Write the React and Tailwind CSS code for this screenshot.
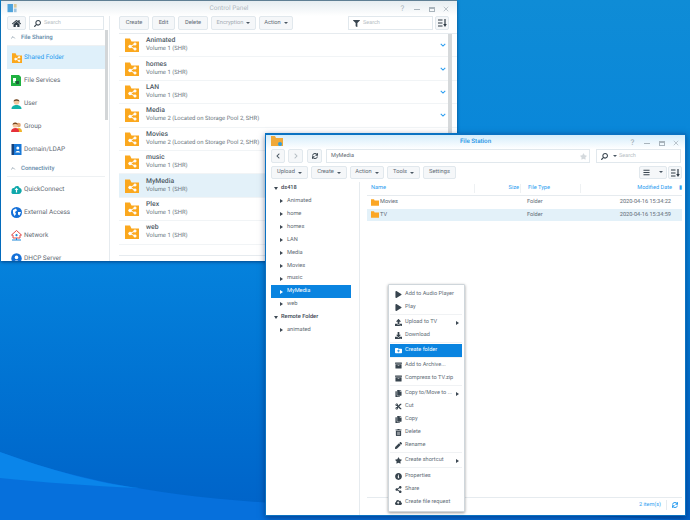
import {
  FaPlay, FaUpload, FaDownload, FaFolderPlus, FaArchive, FaCopy, FaCut, FaTrashAlt, FaPen,
  FaStar, FaInfoCircle, FaShareAlt, FaCloudUploadAlt, FaHome, FaSearch, FaFilter,
  FaChevronLeft, FaChevronRight, FaSync, FaBars,
} from "react-icons/fa";

const sharedFolders = [
  ["Animated", "Volume 1 (SHR)"],
  ["homes", "Volume 1 (SHR)"],
  ["LAN", "Volume 1 (SHR)"],
  ["Media", "Volume 2 (Located on Storage Pool 2, SHR)"],
  ["Movies", "Volume 2 (Located on Storage Pool 2, SHR)"],
  ["music", "Volume 1 (SHR)"],
  ["MyMedia", "Volume 1 (SHR)"],
  ["Plex", "Volume 1 (SHR)"],
  ["web", "Volume 1 (SHR)"],
];

const treeItems = ["Animated", "home", "homes", "LAN", "Media", "Movies", "music", "MyMedia", "web"];

const menuGroups = [
  [["Add to Audio Player", FaPlay], ["Play", FaPlay]],
  [["Upload to TV", FaUpload, true], ["Download", FaDownload]],
  [["Create folder", FaFolderPlus]],
  [["Add to Archive...", FaArchive], ["Compress to TV.zip", FaArchive]],
  [["Copy to/Move to ...", FaCopy, true], ["Cut", FaCut], ["Copy", FaCopy], ["Delete", FaTrashAlt], ["Rename", FaPen]],
  [["Create shortcut", FaStar, true]],
  [["Properties", FaInfoCircle], ["Share", FaShareAlt], ["Create file request", FaCloudUploadAlt]],
];

const Caret = () => (
  <span className="ml-[3px] inline-block border-x-[2px] border-t-[2px] border-x-transparent border-t-[#4a5763] align-middle" />
);

const Btn = ({ children, className = "", faded }) => (
  <div
    className={`flex h-full shrink-0 items-center justify-center rounded-[2px] border border-[#e1e8ed] bg-[#f5f7f9] text-[5.7px] ${
      faded ? "text-[#a5adb4]" : "text-[#5f6a74]"
    } ${className}`}
  >
    {children}
  </div>
);

const SortIcon = () => (
  <svg viewBox="0 0 9 8" className="h-[8px] w-[9px]">
    <path d="M0 1 H4.5 M0 4 H4.5 M0 7 H4.5" stroke="#2f3b45" strokeWidth="1" />
    <path d="M7 0 V6" stroke="#2f3b45" strokeWidth="1.2" />
    <path d="M5.2 5 L8.8 5 L7 8 Z" fill="#2f3b45" />
  </svg>
);

const SharedFolderIcon = ({ className = "h-[14px] w-[14px]" }) => (
  <svg viewBox="0 0 14 14" className={`shrink-0 ${className}`}>
    <path d="M0 2.5 L0 14 L14 14 L14 3.5 L6.5 3.5 L5 0.5 L0 0.5 Z" fill="#fba81e" />
    <g stroke="#fff" strokeWidth="1" fill="#fff">
      <path d="M5 8.5 L10 6 M5 8.5 L10 11" fill="none" />
      <circle cx="5" cy="8.5" r="1.3" />
      <circle cx="10" cy="6" r="1.1" />
      <circle cx="10" cy="11" r="1.1" />
    </g>
  </svg>
);

const FolderIcon = () => (
  <svg viewBox="0 0 10 8" className="h-[7px] w-[8px] shrink-0">
    <path d="M0 1 L0 8 L10 8 L10 1.5 L4.5 1.5 L3.8 0 L0 0 Z" fill="#fba625" />
  </svg>
);

const FileServicesIcon = () => (
  <svg viewBox="0 0 11 11" className="h-[11px] w-[11px]">
    <path d="M0 0 H8 L10 2 V11 H0 Z" fill="#1fb141" />
    <rect x="2" y="3" width="3" height="3" fill="#fff" />
    <rect x="5" y="6" width="3" height="3" fill="#1c5f38" />
    <rect x="2" y="6" width="2" height="2" fill="#bfeccb" />
  </svg>
);

const UserIcon = () => (
  <svg viewBox="0 0 11 11" className="h-[11px] w-[11px]">
    <path d="M0.5 11 C0.5 8 3 7 5.5 7 C8 7 10.5 8 10.5 11 Z" fill="#12b3a8" />
    <circle cx="5.5" cy="4" r="2.8" fill="#f4c8a0" />
    <path d="M2.6 3.6 C2.6 0.6 8.4 0.6 8.4 3.6 C7 2.6 4 2.6 2.6 3.6 Z" fill="#6b4a2e" />
  </svg>
);

const GroupIcon = () => (
  <svg viewBox="0 0 11 11" className="h-[11px] w-[11px]">
    <circle cx="7.6" cy="4" r="2.2" fill="#e3a878" />
    <path d="M5 11 C5 8 6.5 7 8 7 C9.5 7 11 8 11 11 Z" fill="#f0b429" />
    <path d="M0 11 C0 8 2 7 4.5 7 C7 7 8 8 8 11 Z" fill="#e6303a" />
    <circle cx="4.2" cy="4" r="2.6" fill="#f4c8a0" />
    <path d="M1.6 3.8 C1.6 0.8 6.8 0.8 6.8 3.8 C5.6 2.8 3 2.8 1.6 3.8 Z" fill="#7a4a24" />
  </svg>
);

const DomainIcon = () => (
  <svg viewBox="0 0 11 11" className="h-[11px] w-[11px]">
    <rect x="0.5" width="2.5" height="11" fill="#16427c" />
    <rect x="3" width="7.5" height="11" fill="#1778d8" />
    <circle cx="6.8" cy="4" r="1.5" fill="#fff" />
    <path d="M4.4 8.5 C4.4 6.4 9.2 6.4 9.2 8.5 Z" fill="#fff" />
  </svg>
);

const QuickConnectIcon = () => (
  <svg viewBox="0 0 11 11" className="h-[11px] w-[11px]">
    <path d="M2.5 10 C0.4 10 0 8 0.8 7 C0 5 2 3.6 3.2 4.2 C3.8 1.4 8 1 8.6 4 C10.6 4.2 11.4 7 10 8.6 C9.6 9.6 9 10 8 10 Z" fill="#0fa8ab" />
    <path d="M5.5 3.8 L3.6 6 H4.9 V8.4 H6.1 V6 H7.4 Z" fill="#fff" />
  </svg>
);

const GlobeIcon = () => (
  <svg viewBox="0 0 11 11" className="h-[11px] w-[11px]">
    <circle cx="5.5" cy="5.5" r="5.5" fill="#1470d8" />
    <path d="M2 3 L5 1.5 L6 3.5 L4 5 L5 7 L3.5 9 L2 6 Z M7 5 L10 5 L8.5 8.5 L7 7.5 Z" fill="#fff" />
  </svg>
);

const NetworkIcon = () => (
  <svg viewBox="0 0 11 11" className="h-[11px] w-[11px]">
    <path d="M5.5 0.5 L0.5 5 H2 V8 H9 V5 H10.5 Z" fill="#fff" stroke="#e04a4a" strokeWidth="1" />
    <circle cx="5.5" cy="5.2" r="1.1" fill="#1e88d8" />
    <path d="M1 10 H10 M5.5 8 V10" stroke="#1e88d8" strokeWidth="1" />
  </svg>
);

const DhcpIcon = () => (
  <svg viewBox="0 0 11 11" className="h-[11px] w-[11px]">
    <circle cx="5.5" cy="5.5" r="5.2" fill="#1470d8" />
    <circle cx="5.5" cy="4.4" r="1.8" fill="#fff" />
    <path d="M2.4 10 C2.4 6.8 8.6 6.8 8.6 10 Z" fill="#fff" />
  </svg>
);

const NavRow = ({ label, icon, active, className = "" }) => (
  <div
    className={`flex h-[23px] shrink-0 items-center gap-[2px] pl-[4px] text-[6.5px] ${
      active ? "bg-[#dff0fa] text-[#1d9bf0]" : "text-[#5f6a74]"
    } ${className}`}
  >
    <span className="flex h-[11px] w-[11px] shrink-0 items-center justify-center">{icon}</span>
    {label}
  </div>
);

const SectionTitle = ({ label, className = "" }) => (
  <div className={`flex shrink-0 items-center gap-[5px] pl-[3px] text-[6px] font-medium text-[#6189a8] ${className}`}>
    <svg viewBox="0 0 8 5" className="h-[3px] w-[6px]">
      <path d="M1 4 L4 1 L7 4" stroke="#5b7386" fill="none" strokeWidth="1" />
    </svg>
    {label}
  </div>
);

const WinControls = () => (
  <div className="flex items-center gap-[8.5px] text-[#a9b4bc]">
    <span className="w-[6px] text-center text-[8px] leading-none">?</span>
    <span className="h-px w-[6px] bg-[#a9b4bc]" />
    <span className="h-[5px] w-[6px] border border-t-2 border-[#a9b4bc]" />
    <svg viewBox="0 0 8 8" className="h-[6px] w-[6px]">
      <path d="M1 1 L7 7 M7 1 L1 7" stroke="#a9b4bc" strokeWidth="1" />
    </svg>
  </div>
);

const ControlPanel = () => (
  <div className="absolute top-0 left-px flex h-[261px] w-[456px] flex-col overflow-hidden border-t border-[#5f7f94] bg-white shadow-[0_1px_3px_rgba(0,30,80,0.6)]">
    <div className="relative flex h-[15px] shrink-0 items-center justify-center bg-gradient-to-b from-[#e6edf1] to-white text-[6.5px] text-[#aeb8bf]">
      <svg viewBox="0 0 11 11" className="absolute top-[3px] left-[6px] h-[10px] w-[11px]">
        <rect width="6" height="9" fill="#4da3dc" />
        <rect x="7" width="3" height="4" fill="#d8c89a" />
        <rect x="7" y="5" width="3" height="4" fill="#9fc5df" />
      </svg>
      Control Panel
      <div className="absolute top-[4px] right-[8px]">
        <WinControls />
      </div>
    </div>
    <div className="flex min-h-0 flex-1">
      <div className="relative flex w-[109px] shrink-0 flex-col overflow-hidden border-r border-[#e6ebef] pl-[6px]">
        <div className="flex h-[14px] shrink-0 gap-[3px]">
          <Btn className="w-[19px]">
            <FaHome className="h-[9px] w-[9px] text-[#2d3a45]" />
          </Btn>
          <div className="flex w-[75px] items-center gap-[3px] border border-[#e1e8ed] pl-[4px] text-[5.5px] text-[#b5bdc4]">
            <FaSearch className="h-[7px] w-[7px] -scale-x-100 text-[#3a4650]" />
            Search
          </div>
        </div>
        <SectionTitle label="File Sharing" className="mr-[4px] h-[16px] border-b border-[#eef1f3]" />
        <NavRow label="Shared Folder" active className="mr-[4px]" icon={<SharedFolderIcon className="h-[10px] w-[10px]" />} />
        <NavRow label="File Services" icon={<FileServicesIcon />} />
        <NavRow label="User" icon={<UserIcon />} />
        <NavRow label="Group" icon={<GroupIcon />} />
        <NavRow label="Domain/LDAP" icon={<DomainIcon />} />
        <SectionTitle label="Connectivity" className="mr-[4px] h-[16px] border-b border-[#eef1f3]" />
        <NavRow label="QuickConnect" className="mt-[1px]" icon={<QuickConnectIcon />} />
        <NavRow label="External Access" icon={<GlobeIcon />} />
        <NavRow label="Network" icon={<NetworkIcon />} />
        <NavRow label="DHCP Server" icon={<DhcpIcon />} />
        <div className="absolute top-[14px] right-[1px] h-[90px] w-[3px] bg-[#d3d6d8]" />
      </div>
      <div className="flex min-w-0 flex-1 flex-col">
        <div className="flex h-[14px] shrink-0 gap-[3px] pr-[8px] pl-[9px]">
          <Btn className="w-[30px]">Create</Btn>
          <Btn className="w-[23px]">Edit</Btn>
          <Btn className="w-[30px]">Delete</Btn>
          <Btn className="w-[45px]" faded>
            Encryption
            <Caret />
          </Btn>
          <Btn className="w-[34px]">
            Action
            <Caret />
          </Btn>
          <div className="flex-1" />
          <div className="flex w-[85px] items-center gap-[3px] border border-[#e1e8ed] pl-[4px] text-[5.5px] text-[#b5bdc4]">
            <FaFilter className="h-[7px] w-[7px] text-[#3a4650]" />
            Search
          </div>
          <Btn className="-ml-px w-[14px]">
            <SortIcon />
          </Btn>
        </div>
        <div className="mt-[3px] ml-[9px] flex min-h-0 flex-1 flex-col border-t border-[#e6ebef]">
          {sharedFolders.map(([name, sub]) => (
            <div
              key={name}
              className={`flex h-[23.4px] shrink-0 items-center border-b border-[#f1f4f6] pr-[11px] pl-[6px] ${
                name === "MyMedia" ? "bg-[#e3f1f9]" : ""
              }`}
            >
              <SharedFolderIcon />
              <div className="ml-[7px] flex-1 pb-[1px]">
                <div className="text-[6.8px] leading-[10px] font-medium text-[#4f5b66]">{name}</div>
                <div className="text-[5.9px] leading-[9px] text-[#6c7780]">{sub}</div>
              </div>
              <svg viewBox="0 0 8 5" className="h-[4px] w-[6px]">
                <path d="M1 1 L4 4 L7 1" stroke="#2b9df0" fill="none" strokeWidth="1.4" />
              </svg>
            </div>
          ))}
          <div className="mt-auto h-[6px] shrink-0 border-t border-[#e6ebef]" />
        </div>
      </div>
    </div>
    <div className="absolute top-[33px] right-[5px] h-[222px] w-[4px] bg-[#d6d9db]" />
  </div>
);

const TreeArrow = ({ open, light }) =>
  open ? (
    <span className="inline-block shrink-0 border-x-[2px] border-t-[3px] border-x-transparent border-t-[#3d4853]" />
  ) : (
    <span
      className={`inline-block shrink-0 border-y-[2px] border-l-[3px] border-y-transparent ${
        light ? "border-l-white" : "border-l-[#3d4853]"
      }`}
    />
  );

const FileStation = () => (
  <div className="absolute top-[133px] left-[265px] flex h-[383px] w-[421px] flex-col border border-t-2 border-[#0a72c2] bg-white shadow-[0_2px_6px_rgba(0,20,70,0.5)]">
    <div className="relative flex h-[14px] shrink-0 items-center justify-center bg-gradient-to-b from-[#d5edfb] to-white text-[6.2px] font-medium text-[#1d93e6]">
      <svg viewBox="0 0 12 11" className="absolute top-[1px] left-[5px] h-[11px] w-[12px]">
        <path d="M0 1 L0 10 L12 10 L12 2 L5 2 L4 0 L0 0 Z" fill="#f0a93a" />
        <circle cx="9" cy="8" r="2" fill="#2e9fe0" />
      </svg>
      File Station
      <div className="absolute top-[4px] right-[6px]">
        <WinControls />
      </div>
    </div>
    <div className="flex h-[14px] shrink-0 pr-[4px] pl-[5px]">
      <Btn className="w-[14px]">
        <FaChevronLeft className="h-[6px] w-[6px] text-[#4a5763]" />
      </Btn>
      <Btn className="ml-[3px] w-[15px]">
        <FaChevronRight className="h-[6px] w-[6px] text-[#b5bdc4]" />
      </Btn>
      <Btn className="ml-[4px] w-[15px]">
        <FaSync className="h-[6px] w-[6px] text-[#3a4650]" />
      </Btn>
      <div className="ml-[4px] flex w-[264px] items-center justify-between border border-[#e1e8ed] pr-[2px] pl-[4px] text-[5.6px] text-[#5f6a74]">
        MyMedia
        <FaStar className="h-[7px] w-[7px] text-[#d4d9dd]" />
      </div>
      <div className="ml-[6px] flex flex-1 items-center gap-[2px] border border-[#e1e8ed] pl-[4px] text-[5.5px] text-[#b5bdc4]">
        <FaSearch className="h-[7px] w-[7px] -scale-x-100 text-[#3a4650]" />
        <Caret />
        Search
      </div>
    </div>
    <div className="mt-[3px] flex h-[13px] shrink-0 gap-[3px] pr-[3px] pl-[5px]">
      <Btn className="w-[37px]">
        Upload
        <Caret />
      </Btn>
      <Btn className="w-[36px]">
        Create
        <Caret />
      </Btn>
      <Btn className="w-[34px]">
        Action
        <Caret />
      </Btn>
      <Btn className="w-[33px]">
        Tools
        <Caret />
      </Btn>
      <Btn className="w-[33px]">Settings</Btn>
      <div className="flex-1" />
      <Btn className="w-[28px]">
        <FaBars className="h-[7px] w-[7px] text-[#3a4650]" />
        <span className="ml-[6px]">
          <Caret />
        </span>
      </Btn>
      <Btn className="-ml-[2px] w-[14px]">
        <SortIcon />
      </Btn>
    </div>
    <div className="mt-[3px] flex min-h-0 flex-1">
      <div className="flex w-[94px] shrink-0 flex-col border-r border-[#e6ebef] pl-[5px] text-[5.7px] text-[#5e6a74]">
        <div className="flex h-[12.9px] items-center gap-[3px] pl-[3px] font-medium text-[#3d4853]">
          <TreeArrow open />
          ds418
        </div>
        {treeItems.map((item) => (
          <div
            key={item}
            className={`flex h-[12.9px] w-[80px] items-center gap-[4px] pl-[9px] ${
              item === "MyMedia" ? "bg-[#0a84e0] text-white" : ""
            }`}
          >
            <TreeArrow light={item === "MyMedia"} />
            {item}
          </div>
        ))}
        <div className="flex h-[12.9px] items-center gap-[3px] pl-[3px] font-medium text-[#3d4853]">
          <TreeArrow open />
          Remote Folder
        </div>
        <div className="flex h-[12.9px] items-center gap-[4px] pl-[9px]">
          <TreeArrow />
          animated
        </div>
      </div>
      <div className="flex min-w-0 flex-1 flex-col pr-[3px] pl-[7px]">
        <div className="flex h-[14px] shrink-0 items-center border-b border-[#e6ebef] text-[5.6px] text-[#2b9df0]">
          <span className="w-[107px] pl-[4px]">Name</span>
          <span className="w-[46px] border-l border-[#eef1f3] pr-[1px] text-right">Size</span>
          <span className="w-[60px] border-l border-[#eef1f3] pl-[7px]">File Type</span>
          <span className="flex-1 border-l border-[#eef1f3] text-right">Modified Date</span>
          <span className="w-[10px] text-right">▮</span>
        </div>
        {[["Movies", "2020-04-16 15:34:22"], ["TV", "2020-04-16 15:34:59"]].map(([name, date]) => (
          <div
            key={name}
            className={`flex h-[12.5px] shrink-0 items-center pr-[11px] pl-[4px] text-[5.6px] text-[#5e6a74] ${
              name === "TV" ? "bg-[#e3f1f9]" : ""
            }`}
          >
            <FolderIcon />
            <span className="ml-[1px] w-[140px]">{name}</span>
            <span className="w-[60px] pl-[7px]">Folder</span>
            <span className="flex-1 text-right">{date}</span>
          </div>
        ))}
        <div className="flex-1" />
        <div className="flex h-[18px] shrink-0 items-center justify-end border-t border-[#e6ebef] pr-[4px] pb-[3px] text-[5.5px] text-[#2b9df0]">
          2 item(s)
          <span className="mx-[5px] h-[10px] w-px bg-[#e6ebef]" />
          <FaSync className="h-[6px] w-[6px]" />
        </div>
      </div>
    </div>
  </div>
);

const ContextMenu = () => (
  <div className="absolute top-[284px] left-[388px] w-[77px] rounded-[1px] border border-[#cfd6db] bg-white pt-[3px] pr-[2px] pb-[2px] pl-[1px] shadow-[0_1px_3px_rgba(0,0,0,0.4)]">
    {menuGroups.map((group, i) => (
      <div
        key={i}
        className={i === 0 ? "" : i === menuGroups.length - 1 ? "border-t border-[#f0f2f4] pt-[2px]" : "border-t border-[#f0f2f4] pt-[1px]"}
      >
        {group.map(([label, Icon, sub]) => {
          const active = label === "Create folder";
          return (
            <div
              key={label}
              className={`flex h-[13px] items-center pr-[3px] pl-[5px] text-[5.6px] ${
                active ? "bg-[#0a84e0] text-white" : "text-[#626d77]"
              }`}
            >
              <Icon className={`mr-[3px] h-[7px] w-[7px] shrink-0 ${active ? "text-white" : "text-[#38444e]"}`} />
              <span className="flex-1 whitespace-nowrap">{label}</span>
              {sub && <TreeArrow />}
            </div>
          );
        })}
      </div>
    ))}
  </div>
);

export default function App() {
  return (
    <div className="relative h-[520px] w-[690px] overflow-hidden bg-gradient-to-b from-[#0f8cd6] via-[#0582dc] to-[#0062c8] font-['Roboto','Liberation_Sans',sans-serif] [text-rendering:geometricPrecision]">
      <svg viewBox="0 0 690 520" className="absolute inset-0 h-full w-full">
        <path d="M0 452 C70 478 150 495 270 503 L690 520 L0 520 Z" fill="#0670dc" />
        <path d="M0 452 C50 470 100 484 140 488 C90 486 40 482 0 478 Z" fill="#0a85ea" />
      </svg>
      <ControlPanel />
      <FileStation />
      <ContextMenu />
    </div>
  );
}
